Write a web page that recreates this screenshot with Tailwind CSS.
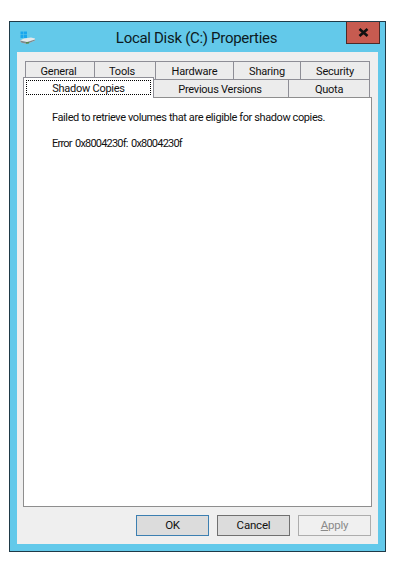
<!DOCTYPE html>
<html lang="en">
<head>
    <meta charset="UTF-8">
    <title>Local Disk (C:) Properties</title>
    <script src="https://cdn.jsdelivr.net/npm/@tailwindcss/browser@4"></script>
</head>
<body class="bg-white w-[401px] h-[568px] overflow-hidden font-['Roboto','Open_Sans',sans-serif] text-[#111]">
<div class="pt-[21px] pl-[9px]">
    <!-- window frame -->
    <div class="relative w-[377px] h-[531px] bg-[#63c9ea] border border-[#1f3a48] pl-[7px] pr-[7px] pb-[7px] flex flex-col">
        <!-- title bar -->
        <div class="h-[30px] flex items-center justify-center shrink-0">
            <svg class="absolute left-[9px] top-[9px]" width="18" height="16" viewBox="0 0 18 16">
                <rect x="1.5" y="0.5" width="3" height="3" fill="#1aa7ee"/>
                <rect x="5" y="0.5" width="3" height="3" fill="#1aa7ee"/>
                <rect x="1.5" y="4" width="3" height="3" fill="#1aa7ee"/>
                <rect x="5" y="4" width="3" height="3" fill="#1aa7ee"/>
                <path d="M1 9.5 L5 7.5 L12 6.5 L16 7.5 L16 9.5 L8 13 L2 11.5 Z" fill="#e4e8ea"/>
                <path d="M1 9.5 L8 11 L16 8.5 L16 9.5 L8 13 L2 11.5 Z" fill="#7d8a8e"/>
                <rect x="7" y="11" width="3" height="1.5" fill="#4e8a4e"/>
            </svg>
            <span class="text-[15px] leading-none tracking-[-0.3px] text-[#0c1a22] mt-[2px] mr-[2px]">Local Disk (C:) Properties</span>
            <!-- close button -->
            <div class="absolute right-[5px] top-0 w-[34px] h-[22px] bg-[#c75b50] border border-[#4c2a28] border-t-0 flex items-center justify-center">
                <svg width="11" height="9" viewBox="0 0 11 9">
                    <path d="M1.5 1 L9.5 8 M9.5 1 L1.5 8" stroke="#111" stroke-width="2.6"/>
                </svg>
            </div>
        </div>
        <!-- client area -->
        <div class="flex-1 bg-[#efefef] pt-[9px] pl-[6px] pr-[6px] flex flex-col">
            <!-- top tab row -->
            <div class="flex pl-[2px] h-[18px] text-[11px] tracking-[-0.2px] leading-none">
                <div class="w-[70px] pt-[2px] pr-[3px] bg-[#ececec] border border-b-0 border-[#8e8e96] flex items-center justify-center">General</div>
                <div class="w-[62px] -ml-px pt-[2px] pr-[6px] bg-[#ececec] border border-b-0 border-[#8e8e96] flex items-center justify-center">Tools</div>
                <div class="w-[79px] -ml-px pt-[2px] bg-[#ececec] border border-b-0 border-[#8e8e96] flex items-center justify-center">Hardware</div>
                <div class="w-[68px] -ml-px pt-[2px] bg-[#ececec] border border-b-0 border-[#8e8e96] flex items-center justify-center">Sharing</div>
                <div class="w-[70px] -ml-px pt-[2px] bg-[#ececec] border border-b-0 border-[#8e8e96] flex items-center justify-center">Security</div>
            </div>
            <!-- second tab row -->
            <div class="flex h-[18px] text-[11px] tracking-[-0.25px] leading-none relative">
                <div class="relative z-10 w-[131px] h-[21px] -mt-[2px] bg-white border border-b-0 border-[#8e8e96] p-[2px]">
                    <div class="h-[15px] pt-[2px] border border-dotted border-black flex items-center justify-center">Shadow Copies</div>
                </div>
                <div class="w-[136px] -ml-px pt-[2px] pr-[2px] bg-[#ececec] border border-b-0 border-[#8e8e96] flex items-center justify-center">Previous Versions</div>
                <div class="w-[82px] -ml-px pt-[2px] bg-[#ececec] border border-b-0 border-[#8e8e96] flex items-center justify-center">Quota</div>
            </div>
            <!-- tab page -->
            <div class="w-[349px] h-[410px] bg-white border border-[#8e8e8e] pt-[12px] pl-[28px] text-[11px] tracking-[-0.4px] leading-[15px]">
                <p class="whitespace-nowrap">Failed to retrieve volumes that are eligible for shadow copies.</p>
                <p class="mt-[11px] tracking-[-0.8px] [word-spacing:1.5px]">Error 0x8004230f: 0x8004230f</p>
            </div>
            <!-- buttons -->
            <div class="flex justify-end gap-[8px] mt-[8px] pr-[1px] text-[11.5px] tracking-[-0.2px] leading-none">
                <button class="w-[73px] h-[21px] bg-[#dcdcdc] border border-[#3c7fb1]">OK</button>
                <button class="w-[73px] h-[21px] bg-[#dcdcdc] border border-[#707070]">Cancel</button>
                <button class="w-[73px] h-[21px] bg-[#f0f0f0] border border-[#adadad] text-[#8a8a8a]"><span class="underline">A</span>pply</button>
            </div>
        </div>
    </div>
</div>
</body>
</html>
